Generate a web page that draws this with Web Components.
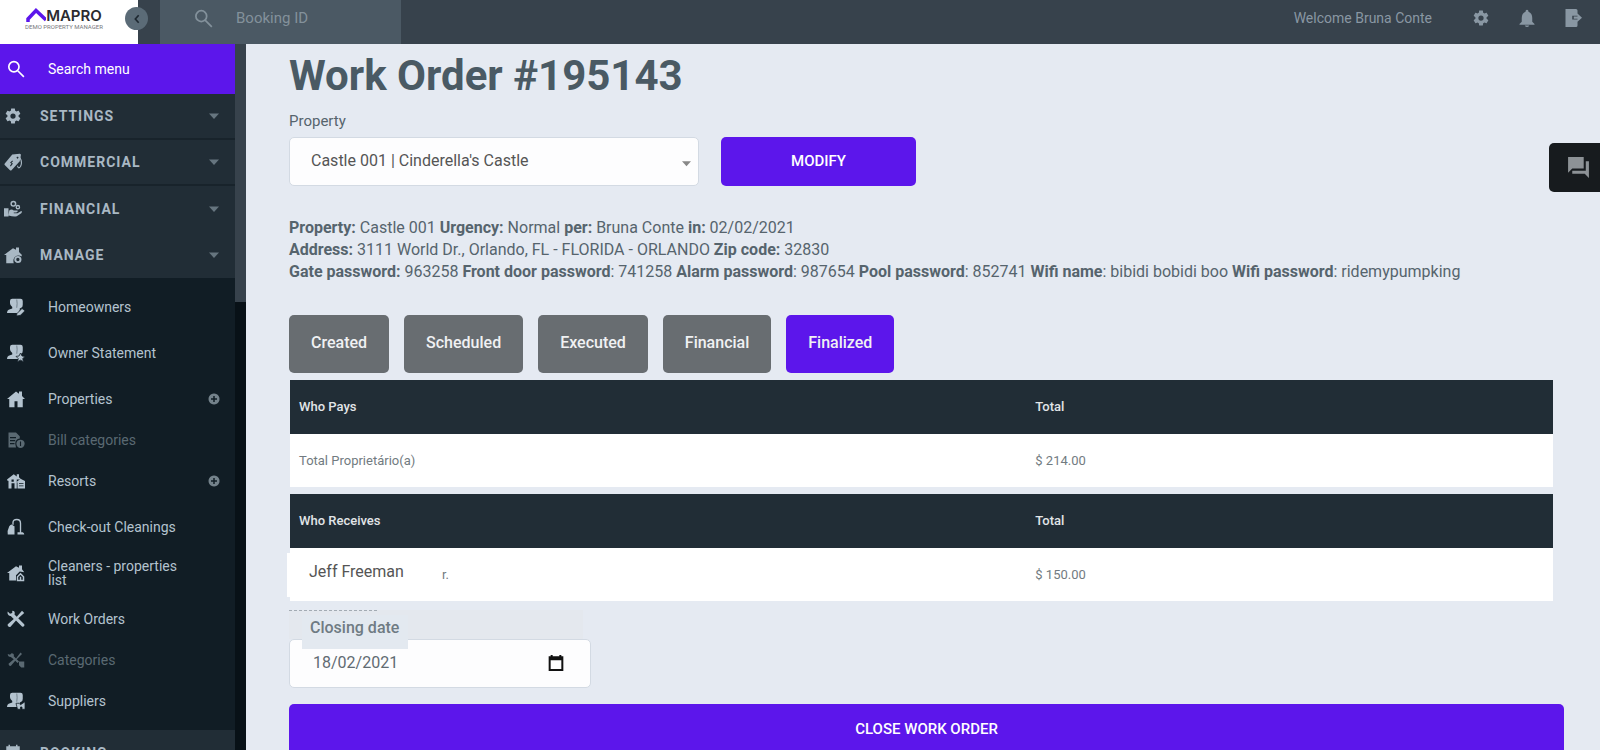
<!DOCTYPE html>
<html lang="en">
<head>
<meta charset="utf-8">
<title>Work Order #195143</title>
<meta name="viewport" content="width=device-width, initial-scale=1">
<style>
  html, body { height: 100%; }
  body {
    margin: 0;
    overflow: hidden;
    font-family: Roboto, "Liberation Sans", sans-serif;
    color: #56646d;
    background: #e5eaf2;
    --accent: #5c16eb;
    --page: #e5eaf2;
    --dark: #212d36;
    --bar: #37424c;
  }
</style>
</head>
<body>
<work-order-app></work-order-app>

<script>
const define = (name, html, setup) => {
  const template = document.createElement('template');
  template.innerHTML = '<style>*{box-sizing:border-box}</style>' + html;
  customElements.define(name, class extends HTMLElement {
    constructor() {
      super();
      this.attachShadow({ mode: 'open' }).append(template.content.cloneNode(true));
    }
    connectedCallback() { if (setup) setup(this, this.shadowRoot); }
  });
};

/* ---------- icons ---------- */
const COG = 'M12,15.5A3.5,3.5 0 0,1 8.5,12A3.5,3.5 0 0,1 12,8.5A3.5,3.5 0 0,1 15.5,12A3.5,3.5 0 0,1 12,15.5M19.43,12.97C19.47,12.65 19.5,12.33 19.5,12C19.5,11.67 19.47,11.34 19.43,11L21.54,9.37C21.73,9.22 21.78,8.95 21.66,8.73L19.66,5.27C19.54,5.05 19.27,4.96 19.05,5.05L16.56,6.05C16.04,5.66 15.5,5.32 14.87,5.07L14.5,2.42C14.46,2.18 14.25,2 14,2H10C9.75,2 9.54,2.18 9.5,2.42L9.13,5.07C8.5,5.32 7.96,5.66 7.44,6.05L4.95,5.05C4.73,4.96 4.46,5.05 4.34,5.27L2.34,8.73C2.21,8.95 2.27,9.22 2.46,9.37L4.57,11C4.53,11.34 4.5,11.67 4.5,12C4.5,12.33 4.53,12.65 4.57,12.97L2.46,14.63C2.27,14.78 2.21,15.05 2.34,15.27L4.34,18.73C4.46,18.95 4.73,19.03 4.95,18.95L7.44,17.94C7.96,18.34 8.5,18.68 9.13,18.93L9.5,21.58C9.54,21.82 9.75,22 10,22H14C14.25,22 14.46,21.82 14.5,21.58L14.87,18.93C15.5,18.67 16.04,18.34 16.56,17.94L19.05,18.95C19.27,19.03 19.54,18.95 19.66,18.73L21.66,15.27C21.78,15.05 21.73,14.78 21.54,14.63L19.43,12.97Z';
const PEOPLE = '<path d="M7 1h11q3 0 3 3v5q0 3-2 4l-2 1v2l-2 4H0q0-4 4-5l3-1v-2Q4 10 4 7V4q0-3 3-3z"/><path d="M13 2q1 5 0 11" stroke="#5f6d78" stroke-width="1" fill="none"/>';
const ICONS = {
  search: '<path fill="none" stroke="currentColor" stroke-width="2.200" d="M16 9a6.800 6.800 0 1 1-13.600 0a6.800 6.800 0 1 1 13.600 0zM14 14l8.500 8.500"/>',
  cog: `<path d="${COG}"/>`,
  tag: '<path fill-rule="evenodd" d="M11 2l10-1q2 0 1.500 2L21 11 10 23q-1 .500-2 0L1 16q-1-1 0-2zM11 10l-3 3 2 1-2 3 1 1 3-4-2-1 2-2zM18 5a1.200 1.200 0 1 0 .1 0z"/><path fill="none" stroke="currentColor" stroke-width="1.500" d="M21 6q4 6 1 12q-3 4-4-1"/>',
  hand: '<path d="M0 11h6v11H0zM7 14q3-3 6 0h5q1 2-2 2.500h-3v1h5l5-3q2 1 0 3l-6 4q-4 1-11-1z"/><circle cx="12.500" cy="5" r="3" fill="none" stroke="currentColor" stroke-width="2"/><circle cx="18.500" cy="9.500" r="2.200" fill="none" stroke="currentColor" stroke-width="1.800"/>',
  housecog: '<path d="M12 3L0 12h3v11h10q-2-7 4-10q4-1 6 1l1-2-4-4V2h-4v3z"/><circle cx="18.500" cy="18" r="3.500" fill="none" stroke="currentColor" stroke-width="2.600"/>',
  owners: PEOPLE + '<path stroke="#111d25" stroke-width="1" d="M13 21l7-7 4 3-6 6-5 1z"/>',
  statement: PEOPLE + '<path stroke="#111d25" stroke-width="1" d="M18 12l2 4 4 .500-3 3 1 4-4-2-4 2 1-4-3-3 4-.500z"/>',
  house: '<path d="M12 2L0 12h3v11h7v-8h4v8h7V12h3l-4-4V2h-4v3z"/>',
  bill: '<path fill-rule="evenodd" d="M2 2h10l5 5v3q-6 1-6 7l1 5H2zM4 8v1.500h8V8zm0 4v1.500h7V12zm0 4v1.500h6V16z"/><circle cx="18" cy="17" r="5.500"/><path d="M18 14v6" stroke="#111d25" stroke-width="1.500"/>',
  resort: '<path fill-rule="evenodd" d="M9 3L0 10l1 2 1-.500V22h4v-7h4v7h3V10h6L16 7V3h-3v3zM6 10h3v3H6z"/><path fill-rule="evenodd" d="M18 9l-6 5h2v8h10V12zM16 15v1h6v-1zm0 3v1h6v-1z"/>',
  vacuum: '<path d="M3 11q3-4 5-1l2 1v11H1q-1-5 2-11z"/><path fill="none" stroke="currentColor" stroke-width="1.800" d="M8 9V6q0-4 5-4t5 5v13"/><path d="M14 19h7q2 1 2 3h-9z"/>',
  cleaners: '<path d="M12 3L0 12h3v10h9v-7l5-5 6 1-3-4V2h-4v3z"/><path fill="none" stroke="currentColor" stroke-width="2" d="M14 22v-5l4-4 4 4v5zM18 17v5"/>',
  tools: '<path d="M20 1l3 3-8 7 8 8c1 2-1 4-3 3l-8-8-7 8c-2 2-5-1-4-3l8-7-4-4c-3 0-5-3-4-6l3 3 3-1V1C10 1 11 3 10 6l3 3z"/>',
  toolcat: '<path d="M18 2l2 2-7 7 3 3-2 2-3-3-6 7q-3 0-3-3l7-6-4-3q-4 0-4-4l3 1 2-2q4 0 3 4l3 3zM16 14h7v8h-4l-3-3z"/>',
  suppliers: PEOPLE + '<path stroke="#111d25" stroke-width="1" d="M12 15h4l2 2 6-4v10h-4v-3h-2v3h-4z"/>',
  calendar: '<path d="M3 3h18v19H3z"/><path d="M6 1h2v3H6zM16 1h2v3h-2z"/>',
  date: '<path fill-rule="evenodd" d="M4 0h3v2h10V0h3v2h3v22H1V2h3zM4 8v13h16V8z"/>',
  bell: '<path d="M12 1q2 0 2 2.500q5 2 5 8.500v5l3 3v1H2v-1l3-3v-5q0-6.500 5-8.500Q10 1 12 1zM9 22h6q-1 2-3 2t-3-2z"/>',
  exit: '<path d="M2 0h14q2 0 2 2v7h-7v5h7v8q0 2-2 2H2zM18 6l6 5.500-6 5.500v-4h-5v-3h5z"/>',
  forum: '<path d="M2 2h15v11H6l-4 4zM19 6h3v16l-4-4H6v-3h13z"/>',
  left: '<path fill="none" stroke="currentColor" stroke-width="4" d="M16 3l-8 9 8 9"/>',
  plus: '<path fill-rule="evenodd" d="M12 1a11 11 0 1 0 .1 0zM10.500 6h3v4.500H18v3h-4.500V18h-3v-4.500H6v-3h4.500z"/>',
  down: '<path d="M0 6h24L12 19z"/>'
};
customElements.define('ui-icon', class extends HTMLElement {
  constructor() { super(); this.attachShadow({ mode: 'open' }); }
  connectedCallback() {
    this.shadowRoot.innerHTML = `<style>
      :host { display: inline-block; flex: none; width: var(--size, 18px); height: var(--size, 18px); }
      svg { display: block; width: 100%; height: 100%; fill: currentColor; }
    </style><svg viewBox="0 0 24 24" aria-hidden="true">${ICONS[this.getAttribute('name')] || ''}</svg>`;
  }
});

/* ---------- top bar ---------- */
define('brand-logo', `
<style>
  :host { display: flex; flex-direction: column; align-items: center; justify-content: center; background: #fff; padding: 0 10px 6px 0; }
  .name { display: flex; align-items: center; font: 600 15px/15px Inter, sans-serif; color: #2b2b2f; }
  svg { width: 20px; height: 15px; }
  small { font: 6px/8px Roboto, sans-serif; color: #77777c; white-space: nowrap; }
</style>
<div class="name"><svg viewBox="0 0 20 15" aria-hidden="true"><path d="M2 14V11L10 2.500l10 9.500" fill="none" stroke="#5c16eb" stroke-width="3.500"/></svg><span>MAPRO</span></div>
<small>DEMO PROPERTY MANAGER</small>`);

define('top-bar', `
<style>
  :host { display: flex; height: 44px; background: var(--bar); color: #8997a3; }
  brand-logo { width: 138px; }
  .toggle { width: 23px; height: 23px; margin: 7px 0 0 -13px; padding: 0; border: 0; border-radius: 50%; background: #5b6b77; color: #1d2730; display: grid; place-items: center; --size: 10px; }
  form { display: flex; align-items: center; gap: 23px; width: 241px; margin-left: 12px; padding: 0 16px 8px 34px; background: #4b5964; color: #83919b; --size: 19px; }
  input { min-width: 0; flex: 1; padding: 0; border: 0; outline: 0; background: none; font: 15px/20px Roboto, sans-serif; color: inherit; }
  input::placeholder { color: #83919b; opacity: 1; }
  nav { display: flex; align-items: center; gap: 28px; margin-left: auto; padding: 0 18px 8px 0; font-size: 14px; --size: 18px; }
  nav span { margin-right: 12px; }
  nav button { display: flex; padding: 0; border: 0; background: none; color: inherit; }
</style>
<brand-logo></brand-logo>
<button class="toggle" aria-label="Collapse menu"><ui-icon name="left"></ui-icon></button>
<form><ui-icon name="search"></ui-icon><input aria-label="Booking ID" placeholder="Booking ID"></form>
<nav><span>Welcome Bruna Conte</span>
  <button aria-label="Settings"><ui-icon name="cog"></ui-icon></button>
  <button aria-label="Notifications"><ui-icon name="bell"></ui-icon></button>
  <button aria-label="Log out"><ui-icon name="exit"></ui-icon></button>
</nav>`);

/* ---------- side menu ---------- */
const setIcon = (root, name) => {
  const icon = document.createElement('ui-icon');
  icon.setAttribute('name', name);
  root.querySelector('.lead').replaceWith(icon);
};

define('nav-section', `
<style>
  :host { display: block; flex: none; }
  a { display: flex; align-items: center; gap: 18px; height: 46px; padding: 0 16px 0 4px; background: var(--dark); color: #a9b8c4; text-decoration: none; font: 700 14px/18px Roboto, sans-serif; letter-spacing: 1px; }
  :host([divided]) a { border-bottom: 2px solid #18232b; }
  span { flex: 1; }
  .arrow { --size: 10px; color: #66757f; }
  .items { background: #111d25; padding: 6px 0; }
  .items[hidden] { display: none; }
</style>
<a href="#"><i class="lead"></i><span></span><ui-icon class="arrow" name="down"></ui-icon></a>
<div class="items"><slot></slot></div>`, (host, root) => {
  setIcon(root, host.getAttribute('icon'));
  root.querySelector('span').textContent = host.getAttribute('label');
  root.querySelector('.items').hidden = !host.hasAttribute('open');
});

define('nav-item', `
<style>
  :host { display: block; }
  a { display: flex; align-items: center; gap: 23px; height: 46px; padding: 0 15px 0 7px; color: #b4c3cf; text-decoration: none; font: 14px/14px Roboto, sans-serif; }
  :host([minor]) a { height: 36px; color: #5a6972; }
  span { flex: 1; max-width: 140px; }
  .plus { --size: 12px; margin-left: auto; color: #74828b; }
</style>
<a href="#"><i class="lead"></i><span><slot></slot></span></a>`, (host, root) => {
  setIcon(root, host.getAttribute('icon'));
  if (host.hasAttribute('expandable')) {
    const plus = document.createElement('ui-icon');
    plus.className = 'plus';
    plus.setAttribute('name', 'plus');
    root.querySelector('a').append(plus);
  }
});

define('side-menu', `
<style>
  :host { display: flex; width: 246px; overflow: hidden; background: #081117; }
  .menu { width: 235px; display: flex; flex-direction: column; background: #111d25; }
  .search { display: flex; flex: none; align-items: center; gap: 23px; height: 50px; padding: 0 7px; background: var(--accent); color: #fff; }
  input { min-width: 0; flex: 1; padding: 0; border: 0; outline: 0; background: none; color: inherit; font: 14px/18px Roboto, sans-serif; }
  input::placeholder { color: #fff; opacity: 1; }
  .thumb { flex: 1; height: 258px; background: var(--bar); }
</style>
<div class="menu">
  <label class="search"><ui-icon name="search"></ui-icon><input aria-label="Search menu" placeholder="Search menu"></label>
  <nav-section icon="cog" label="SETTINGS" divided></nav-section>
  <nav-section icon="tag" label="COMMERCIAL" divided></nav-section>
  <nav-section icon="hand" label="FINANCIAL"></nav-section>
  <nav-section icon="housecog" label="MANAGE" open>
    <nav-item icon="owners">Homeowners</nav-item>
    <nav-item icon="statement">Owner Statement</nav-item>
    <nav-item icon="house" expandable>Properties</nav-item>
    <nav-item icon="bill" minor>Bill categories</nav-item>
    <nav-item icon="resort" expandable>Resorts</nav-item>
    <nav-item icon="vacuum">Check-out Cleanings</nav-item>
    <nav-item icon="cleaners">Cleaners - properties list</nav-item>
    <nav-item icon="tools">Work Orders</nav-item>
    <nav-item icon="toolcat" minor>Categories</nav-item>
    <nav-item icon="suppliers">Suppliers</nav-item>
  </nav-section>
  <nav-section icon="calendar" label="BOOKING"></nav-section>
</div>
<div class="thumb"></div>`);

/* ---------- work order page ---------- */
define('property-picker', `
<style>
  :host { display: grid; grid-template-columns: 410px 195px; column-gap: 22px; row-gap: 6px; }
  label { grid-column: 1 / -1; font-size: 15px; line-height: 20px; }
  .field { position: relative; }
  select { width: 100%; height: 49px; padding: 0 40px 2px 21px; border: 1px solid #d3dae3; border-radius: 5px; appearance: none; background: #fdfdfe; color: #555; font: 16px/20px Roboto, sans-serif; }
  ui-icon { position: absolute; right: 8px; top: 22px; --size: 9px; color: #888; pointer-events: none; }
  button { padding: 0 0 2px; border: 0; border-radius: 5px; background: var(--accent); color: #fff; font: 500 15px/20px Roboto, sans-serif; }
</style>
<label for="property">Property</label>
<div class="field"><select id="property"><option>Castle 001 | Cinderella's Castle</option></select><ui-icon name="down"></ui-icon></div>
<button>MODIFY</button>`);

define('order-summary', `
<style>
  :host { display: block; font-size: 16px; line-height: 22px; }
  p { margin: 0; }
</style>
<p><b>Property:</b> Castle 001 <b>Urgency:</b> Normal <b>per:</b> Bruna Conte <b>in:</b> 02/02/2021</p>
<p><b>Address:</b> 3111 World Dr., Orlando, FL - FLORIDA - ORLANDO <b>Zip code:</b> 32830</p>
<p><b>Gate password:</b> 963258 <b>Front door password</b>: 741258 <b>Alarm password</b>: 987654 <b>Pool password</b>: 852741 <b>Wifi name</b>: bibidi bobidi boo <b>Wifi password</b>: ridemypumpking</p>`);

define('step-button', `
<style>
  :host { display: block; }
  button { height: 58px; padding: 0 22px 2px; border: 0; border-radius: 5px; background: #686d71; color: #f0f1f3; font: 500 16px/20px Roboto, sans-serif; }
  :host([current]) button { background: var(--accent); }
</style>
<button><slot></slot></button>`);

define('totals-table', `
<style>
  :host { display: block; }
  table { width: 100%; border-collapse: collapse; table-layout: fixed; background: #fff; font-size: 13px; line-height: 18px; }
  th, td { padding: 0 0 0 9px; text-align: left; }
  th { height: 54px; background: var(--dark); color: #e1e5e8; font-weight: 500; }
  td { height: 53px; color: #727b81; }
  col:first-child { width: 58.300%; }
</style>
<table><colgroup><col><col></colgroup>
  <thead><tr><th></th><th>Total</th></tr></thead>
  <tbody><tr><td><slot></slot></td><td></td></tr></tbody>
</table>`, (host, root) => {
  root.querySelector('th').textContent = host.getAttribute('heading');
  root.querySelectorAll('td')[1].textContent = host.getAttribute('total');
});

define('payee-name', `
<style>
  :host { position: relative; display: flex; align-items: center; margin-left: -12px; }
  strong { width: 155px; padding: 9px 0 15px 22px; background: #fff; color: #555; font: 16px/20px Roboto, sans-serif; }
</style>
<strong><slot></slot></strong><span>r.</span>`);

define('closing-date', `
<style>
  :host { display: block; position: relative; width: 302px; }
  .strip { width: 294px; height: 29px; background: #e4e8ee; }
  .strip::before { content: ""; display: block; width: 88px; border-top: 1px dashed #a3abb3; }
  .field { display: flex; align-items: center; height: 49px; padding: 0 26px 2px 23px; border: 1px solid #d3dae3; border-radius: 5px; background: #fdfdfe; }
  input { min-width: 0; flex: 1; padding: 0; border: 0; outline: 0; background: none; color: #616b72; font: 16px/20px Roboto, sans-serif; }
  button { display: flex; padding: 0; border: 0; background: none; color: #111; --size: 16px; }
  label { display: block; position: absolute; top: 5px; left: 13px; width: 106px; height: 34px; padding: 3px 8px; background: #e3e9f0; color: #6f7b83; font: 500 16px/20px Roboto, sans-serif; }
</style>
<div class="strip"></div>
<div class="field"><input id="closing" value="18/02/2021"><button aria-label="Open calendar"><ui-icon name="date"></ui-icon></button></div>
<label for="closing">Closing date</label>`);

define('work-order-page', `
<style>
  :host { display: block; min-width: 0; overflow: hidden; padding: 8px 36px 0 43px; background: var(--page); }
  h1 { margin: 0; font-size: 42px; line-height: 48px; font-weight: 700; color: #4a5a64; }
  property-picker { margin-top: 11px; }
  order-summary { margin-top: 31px; }
  .steps { display: flex; gap: 15px; margin-top: 32px; }
  .tables { display: grid; gap: 7px; margin: 7px 11px 0 1px; }
  closing-date { margin-top: 9px; }
  .close { display: block; width: 100%; height: 54px; margin-top: 16px; padding: 0 0 4px; border: 0; border-radius: 5px; background: var(--accent); color: #fff; font: 500 15px/20px Roboto, sans-serif; }
</style>
<h1>Work Order #195143</h1>
<property-picker></property-picker>
<order-summary></order-summary>
<div class="steps">
  <step-button>Created</step-button><step-button>Scheduled</step-button><step-button>Executed</step-button><step-button>Financial</step-button><step-button current>Finalized</step-button>
</div>
<div class="tables">
  <totals-table heading="Who Pays" total="$ 214.00">Total Proprietário(a)</totals-table>
  <totals-table heading="Who Receives" total="$ 150.00"><payee-name>Jeff Freeman</payee-name></totals-table>
</div>
<closing-date></closing-date>
<button class="close">CLOSE WORK ORDER</button>`);

define('work-order-app', `
<style>
  :host { display: grid; grid-template: auto minmax(0, 1fr) / auto minmax(0, 1fr); height: 100vh; overflow: hidden; }
  top-bar { grid-column: 1 / -1; }
  .chat { position: fixed; right: 0; top: 143px; display: flex; padding: 12px 9px 12px 17px; border: 0; border-radius: 5px 0 0 5px; background: #171b1e; color: #8d9296; --size: 25px; }
</style>
<top-bar></top-bar>
<side-menu></side-menu>
<work-order-page></work-order-page>
<button class="chat" aria-label="Chat"><ui-icon name="forum"></ui-icon></button>`);
</script>
</body>
</html>
